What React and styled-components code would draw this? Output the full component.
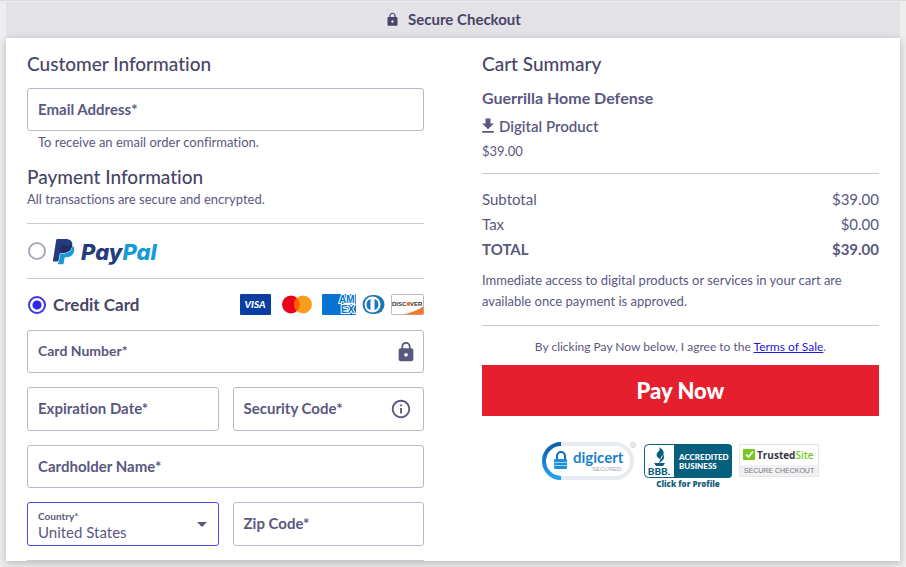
import styled, { createGlobalStyle } from "styled-components";
import { useState } from "react";
import {
  MdArrowDropDown,
  MdFileDownload,
  MdInfoOutline,
  MdLock,
} from "react-icons/md";

const GlobalStyle = createGlobalStyle`
  * {
    box-sizing: border-box;
  }
  body {
    margin: 0;
    background: #eeeeef;
    color: #5a587f;
    font-family: Lato, "Open Sans", sans-serif;
    font-variant-ligatures: none;
  }
  input, select, button {
    font-family: inherit;
    color: inherit;
  }
`;

const StyledPage = styled.div`
  border-top: 1px solid #dcdcde;
  padding: 1px 6px 6px;
`;

const StyledBanner = styled.header`
  display: flex;
  align-items: center;
  justify-content: center;
  gap: 8px;
  height: 36px;
  padding-bottom: 2px;
  background: #e3e2e7;
  color: #484566;
  font-size: 15px;
  font-weight: 700;
`;

const StyledCard = styled.main`
  display: grid;
  grid-template-columns: repeat(2, minmax(0, 1fr));
  gap: 58px;
  padding: 14px 21px 0;
  background: #fff;
  box-shadow: 0 2px 8px rgba(0, 0, 0, 0.24);
`;

const StyledHeading = styled.h2`
  margin: ${({ $top }) => $top || 0}px 0 0;
  color: #484566;
  font-size: 19px;
  font-weight: 500;
  line-height: 24px;
`;

const StyledNote = styled.p`
  margin: 2px 0 0;
  padding-left: ${({ $indent }) => ($indent ? 11 : 0)}px;
  font-size: 13px;
  line-height: ${({ $indent }) => ($indent ? 18 : 16)}px;
`;

const StyledRule = styled.hr`
  margin: ${({ $top }) => $top || 0}px 0 0;
  border: none;
  border-top: 1px solid #c9c8d2;
`;

const StyledField = styled.label`
  display: flex;
  align-items: center;
  gap: 8px;
  height: ${({ $half }) => ($half ? 44 : 43)}px;
  margin-top: ${({ $top }) => $top || 0}px;
  padding: 0 ${({ $small }) => ($small ? 6 : 11)}px 0 10px;
  border: 1px solid #b9b8c6;
  border-radius: 3px;
  font-size: ${({ $small }) => ($small ? 14 : 15)}px;
  font-weight: 700;
  white-space: nowrap;
  svg {
    flex: none;
  }
`;

const StyledLabelText = styled.span`
  padding-bottom: 2px;
`;

const StyledInput = styled.input`
  flex: 1;
  min-width: 0;
  border: none;
  background: none;
  font-size: 15px;
  :focus {
    outline: none;
  }
`;

const StyledFields = styled.div`
  display: grid;
  gap: 14px;
`;

const StyledPair = styled.div`
  display: grid;
  grid-template-columns: repeat(2, minmax(0, 1fr));
  gap: 14px;
`;

const StyledSelectField = styled.label`
  display: grid;
  grid-template-columns: minmax(0, 1fr) 24px;
  align-items: center;
  height: 44px;
  padding: 0 4px 0 10px;
  border: 1px solid #5046e5;
  border-radius: 3px;
  svg {
    grid-column: 2;
    grid-row: 1;
    pointer-events: none;
  }
`;

const StyledSelectText = styled.span`
  display: flex;
  flex-direction: column;
  grid-column: 1;
  grid-row: 1;
  padding-top: 2px;
  font-size: 10px;
  font-weight: 700;
  line-height: 14px;
  select {
    appearance: none;
    height: 19px;
    padding: 0;
    border: none;
    background: none;
    font-size: 15px;
    outline: none;
  }
`;

const StyledMethod = styled.div`
  display: flex;
  align-items: center;
  justify-content: space-between;
  height: ${({ $height }) => $height}px;
`;

const StyledMethodLabel = styled.label`
  display: flex;
  align-items: center;
  gap: 7px;
  color: #484566;
  font-size: 17px;
  font-weight: 700;
`;

const StyledRadio = styled.input`
  appearance: none;
  width: 18px;
  height: 18px;
  margin: 0 0 0 1px;
  border: 2px solid #aeacba;
  border-radius: 50%;
  &:checked {
    border-color: #3e35de;
    background: radial-gradient(circle, #2f25e6 4px, transparent 5px);
  }
`;

const StyledCards = styled.div`
  display: flex;
  gap: 6px;
`;

const StyledProduct = styled.h3`
  margin: 11px 0 0;
  font-size: 16px;
  font-weight: 700;
  line-height: 22px;
`;

const StyledKind = styled.div`
  display: flex;
  align-items: center;
  margin-top: 7px;
  gap: 1px;
  font-size: 15px;
  font-weight: 600;
  line-height: 20px;
  svg {
    margin-left: -4px;
  }
`;

const StyledPrice = styled.div`
  margin-top: 6px;
  font-size: 13px;
  line-height: 18px;
`;

const StyledTotals = styled.dl`
  margin: 13px 0 0;
`;

const StyledTotal = styled.div`
  display: flex;
  justify-content: space-between;
  font-size: 15px;
  font-weight: ${({ $bold }) => ($bold ? 700 : 400)};
  line-height: 25px;
  dd {
    margin: 0;
  }
`;

const StyledDelivery = styled.p`
  margin: 8px 0 0;
  font-size: 13px;
  line-height: 21px;
`;

const StyledTerms = styled.p`
  margin: 13px 0 0;
  font-size: 12px;
  line-height: 16px;
  text-align: center;
  a {
    color: #2319e0;
  }
`;

const StyledPayButton = styled.button`
  width: 100%;
  height: 51px;
  margin-top: 10px;
  border: none;
  background: #e51f2d;
  color: #fff;
  font-size: 22px;
  font-weight: 900;
  cursor: pointer;
`;

const StyledSeals = styled.div`
  display: flex;
  justify-content: center;
  gap: 7px;
  margin-top: 26px;
`;

const PayPalLogo = () => (
  <svg width="106" height="28" viewBox="0 0 106 28" role="img" aria-label="PayPal">
    <g transform="translate(-2 2) scale(1.05)">
      <path
        fill="#179bd7"
        d="M21.222 6.917a3.35 3.35 0 0 0-.607-.541c-.013.076-.026.175-.041.254-.93 4.778-4.005 7.201-9.138 7.201h-2.19a.563.563 0 0 0-.556.479l-1.187 7.527h-.506l-.24 1.516a.56.56 0 0 0 .554.647h3.882c.46 0 .85-.334.922-.788.06-.26.76-4.852.816-5.09a.932.932 0 0 1 .923-.788h.58c3.76 0 6.705-1.528 7.565-5.946.36-1.847.174-3.388-.777-4.471z"
      />
      <path
        fill="#253b80"
        d="M7.076 21.337H2.47a.641.641 0 0 1-.633-.74L4.944.901C5.026.382 5.474 0 5.998 0h7.46c2.57 0 4.578.543 5.69 1.81 1.01 1.15 1.304 2.42 1.012 4.287-.023.143-.047.288-.077.437-.983 5.05-4.349 6.797-8.647 6.797h-2.19c-.524 0-.968.382-1.05.9l-1.12 7.106z"
      />
      <path
        fill="#222d65"
        d="M8.2 14.2l1.2-7.5c.1-.6.5-1 1.1-1h7.2c1 .1 1.8.3 2.4.6-.98 5.2-4.36 7.03-8.66 7.03h-2.19c-.5 0-.9.4-1.05.87z"
      />
    </g>
    <text
      x="28"
      y="23"
      fontFamily="Inter"
      fontSize="22"
      fontWeight="800"
      fontStyle="italic"
      fill="#253b80"
    >
      Pay<tspan fill="#179bd7">Pal</tspan>
    </text>
  </svg>
);

const CardLogos = () => (
  <StyledCards>
    <svg width="31" height="21" role="img" aria-label="Visa">
      <rect width="31" height="21" rx="1" fill="#0a3ea3" />
      <text x="15" y="14" fontSize="10" fontWeight="900" fontStyle="italic" fill="#fff" textAnchor="middle">
        VISA
      </text>
    </svg>
    <svg width="39" height="21" role="img" aria-label="Mastercard">
      <circle cx="14" cy="10.5" r="9" fill="#eb001b" />
      <circle cx="26" cy="10.5" r="9" fill="#f79e1b" />
      <path d="M20 3.8a9 9 0 0 1 0 13.4a9 9 0 0 1 0-13.4z" fill="#ff5f00" />
    </svg>
    <svg width="34" height="21" role="img" aria-label="American Express">
      <rect width="34" height="21" rx="1" fill="#0673d2" />
      <g fontFamily="Liberation Sans" fontSize="10" fontWeight="700" fill="#0673d2" stroke="#fff" strokeWidth="2" paintOrder="stroke">
        <text x="17" y="9">AM</text>
        <text x="19" y="19">EX</text>
      </g>
    </svg>
    <svg width="23" height="21" role="img" aria-label="Diners Club">
      <path d="M10 1h3a9.5 9.5 0 0 1 0 19h-3a9.5 9.5 0 0 1 0-19z" fill="#1b78b8" />
      <circle cx="10.5" cy="10.5" r="8" fill="#fff" />
      <path d="M8.5 5a5.8 5.8 0 0 0 0 11zM12.5 5a5.8 5.8 0 0 1 0 11z" fill="#1b78b8" />
    </svg>
    <svg width="33" height="21" role="img" aria-label="Discover">
      <rect x="0.5" y="0.5" width="32" height="20" rx="1" fill="#fff" stroke="#bbb" />
      <path d="M12 20.5C20 19 27 16 32.5 12.5v8z" fill="#f2792a" />
      <g fontFamily="Liberation Sans" fontSize="6" fontWeight="700" fill="#333">
        <text x="1" y="12">DISC</text>
        <text x="19" y="12">VER</text>
      </g>
      <circle cx="17.5" cy="10" r="2" fill="#f26b21" />
    </svg>
  </StyledCards>
);

const DigicertSeal = () => (
  <svg width="95" height="50" role="img" aria-label="DigiCert secured">
    <defs>
      <linearGradient id="ring" x1="0" y1="0" x2="0" y2="1">
        <stop offset="0" stopColor="#0b5ea8" />
        <stop offset="1" stopColor="#1fa2f5" />
      </linearGradient>
    </defs>
    <rect x="2" y="2" width="88" height="34" rx="17" fill="#fff" stroke="#e8ebf0" strokeWidth="4" />
    <path d="M19 2a17 17 0 0 0 0 34" fill="none" stroke="url(#ring)" strokeWidth="4" />
    <path d="M15 18v-4a4 4 0 0 1 8 0v4" fill="none" stroke="#1269ad" strokeWidth="2" />
    <rect x="12" y="17" width="13" height="10" rx="1" fill="#1f8fe0" />
    <path d="M12 20.5h13M12 23.5h13" stroke="#fff" strokeWidth="0.6" />
    <text x="31" y="21" fontSize="15" fontWeight="700" fill="#1a82cc">
      digicert
    </text>
    <text x="50" y="29" fontFamily="Liberation Sans" fontSize="6" fill="#a4a7b0">
      SECURED
    </text>
    <circle cx="91" cy="3" r="2.5" fill="none" stroke="#c9cbd0" />
    <path d="M91 2v2" stroke="#c9cbd0" />
  </svg>
);

const BbbSeal = () => (
  <svg width="88" height="50" role="img" aria-label="BBB accredited business">
    <rect x="0.5" y="2.5" width="87" height="33" rx="4" fill="#fff" stroke="#155f7d" />
    <path d="M30 2h54a4 4 0 0 1 4 4v26a4 4 0 0 1-4 4H30z" fill="#075f7e" />
    <path d="M15 5c5 3 6 6 3 9-2 2-1 3 0 4-5-2-7-5-4-8 2-2 2-3 1-5zM19 12c2 3 1 5-1 7l-3 2c0-3 4-4 4-9zM10 21h11l-2 3h-7z" fill="#075f7e" />
    <text x="15" y="33" fontSize="10" fontWeight="900" fill="#075f7e" textAnchor="middle">
      BBB.
    </text>
    <g fontFamily="Lato" fontSize="8" fontWeight="900" fill="#fff">
      <text x="35" y="18">ACCREDITED</text>
      <text x="35" y="27">BUSINESS</text>
    </g>
    <text x="44" y="45" fontFamily="Open Sans" fontSize="8" fontWeight="800" fill="#155f7d" textAnchor="middle">
      Click for Profile
    </text>
  </svg>
);

const TrustedSiteSeal = () => (
  <svg width="80" height="50" role="img" aria-label="TrustedSite secure checkout">
    <rect x="0.5" y="2.5" width="79" height="32" fill="#fff" stroke="#e6e6e8" />
    <rect x="1" y="23" width="78" height="11" fill="#f1f1f3" />
    <rect x="4" y="7" width="12" height="11" rx="1" fill="#76c81b" />
    <path d="M7 12.5l2.5 2.5 4.5-5.5" fill="none" stroke="#fff" strokeWidth="1.8" />
    <text x="18" y="17" fontFamily="Open Sans" fontSize="10" fontWeight="700" fill="#3b3548">
      Trusted<tspan fontWeight="600" fill="#76c81b">Site</tspan>
    </text>
    <text x="40" y="31" fontFamily="Liberation Sans" fontSize="7" fill="#77757f" textAnchor="middle">
      SECURE CHECKOUT
    </text>
  </svg>
);

const Field = ({ label, half, small, top, icon, ...rest }) => (
  <StyledField $half={half} $small={small} $top={top}>
    <StyledLabelText>{label}*</StyledLabelText>
    <StyledInput {...rest} />
    {icon}
  </StyledField>
);

const CustomerForm = () => {
  const [method, setMethod] = useState("card");
  return (
    <form id="checkout">
      <StyledHeading>Customer Information</StyledHeading>
      <Field label="Email Address" type="email" name="email" top={12} />
      <StyledNote $indent>To receive an email order confirmation.</StyledNote>

      <StyledHeading $top={14}>Payment Information</StyledHeading>
      <StyledNote>All transactions are secure and encrypted.</StyledNote>
      <StyledRule $top={16} />
      <StyledMethod $height={54}>
        <StyledMethodLabel>
          <StyledRadio
            type="radio"
            name="method"
            checked={method === "paypal"}
            onChange={() => setMethod("paypal")}
          />
          <PayPalLogo />
        </StyledMethodLabel>
      </StyledMethod>
      <StyledRule />
      <StyledMethod $height={51}>
        <StyledMethodLabel>
          <StyledRadio
            type="radio"
            name="method"
            checked={method === "card"}
            onChange={() => setMethod("card")}
          />
          Credit Card
        </StyledMethodLabel>
        <CardLogos />
      </StyledMethod>

      <StyledFields>
        <Field small label="Card Number" name="number" icon={<MdLock size={22} />} />
        <StyledPair>
          <Field half label="Expiration Date" name="expiration" />
          <Field half label="Security Code" name="cvv" icon={<MdInfoOutline size={22} />} />
        </StyledPair>
        <Field label="Cardholder Name" name="holder" />
        <StyledPair>
          <StyledSelectField>
            <StyledSelectText>
              Country*
              <select name="country" defaultValue="US">
                <option value="US">United States</option>
                <option value="CA">Canada</option>
              </select>
            </StyledSelectText>
            <MdArrowDropDown size={24} />
          </StyledSelectField>
          <Field half label="Zip Code" name="zip" />
        </StyledPair>
      </StyledFields>
      <StyledRule $top={14} />
    </form>
  );
};

const CartSummary = () => (
  <section>
    <StyledHeading>Cart Summary</StyledHeading>
    <StyledProduct>Guerrilla Home Defense</StyledProduct>
    <StyledKind>
      <MdFileDownload size={20} />
      Digital Product
    </StyledKind>
    <StyledPrice>$39.00</StyledPrice>
    <StyledRule $top={13} />
    <StyledTotals>
      <StyledTotal>
        <dt>Subtotal</dt>
        <dd>$39.00</dd>
      </StyledTotal>
      <StyledTotal>
        <dt>Tax</dt>
        <dd>$0.00</dd>
      </StyledTotal>
      <StyledTotal $bold>
        <dt>TOTAL</dt>
        <dd>$39.00</dd>
      </StyledTotal>
    </StyledTotals>
    <StyledDelivery>
      Immediate access to digital products or services in your cart are
      available once payment is approved.
    </StyledDelivery>
    <StyledRule $top={13} />
    <StyledTerms>
      By clicking Pay Now below, I agree to the <a href="#terms">Terms of Sale</a>.
    </StyledTerms>
    <StyledPayButton type="submit" form="checkout">
      Pay Now
    </StyledPayButton>
    <StyledSeals>
      <DigicertSeal />
      <BbbSeal />
      <TrustedSiteSeal />
    </StyledSeals>
  </section>
);

const App = () => (
  <>
    <GlobalStyle />
    <StyledPage>
      <StyledBanner>
        <MdLock size={15} />
        Secure Checkout
      </StyledBanner>
      <StyledCard>
        <CustomerForm />
        <CartSummary />
      </StyledCard>
    </StyledPage>
  </>
);

export default App;
